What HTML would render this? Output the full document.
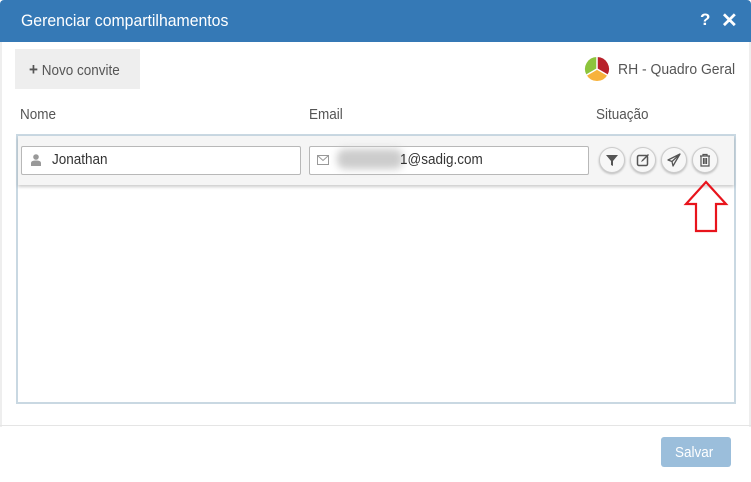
<!DOCTYPE html>
<html><head><style>
body{margin:0;width:751px;height:482px;background:#fff;font-family:"Liberation Sans",sans-serif;overflow:hidden;position:relative}
.a{position:absolute}
.t{display:inline-block;transform:scaleX(.9);transform-origin:left center;white-space:nowrap}
.hdr{left:0;top:0;width:751px;height:42px;background:#3579b6;border-radius:4px 4px 0 0}
.inp{background:#fff;border:1px solid #b8b8b8;border-radius:2px;height:27px;top:146px}
.cb{width:24px;height:24px;border-radius:50%;background:#f7f7f7;border:1px solid #ccc;box-shadow:0 1px 2px rgba(0,0,0,.25);top:147px}
.cb svg{position:absolute;left:5px;top:5px}
</style></head><body>
<div class="a hdr"></div>
<div class="a" style="left:21px;top:11px;color:#fff;font-size:17px"><span class="t" style="transform:scaleX(.93)">Gerenciar compartilhamentos</span></div>
<div class="a" style="left:700px;top:10px;color:#fff;font-size:17px;font-weight:bold">?</div>
<div class="a" style="left:721px;top:8px;color:#fff;font-size:20px;font-weight:bold">✕</div>
<div class="a" style="left:0;top:42px;width:2px;height:385px;background:#eee"></div>
<div class="a" style="left:749px;top:42px;width:2px;height:385px;background:#eee"></div>
<div class="a" style="left:15px;top:49px;width:125px;height:40px;background:#eeeeee"></div>
<div class="a" style="left:29px;top:60px;color:#555;font-size:15px"><span class="t"><b style="font-size:17px">+</b> Novo convite</span></div>
<svg class="a" style="left:583px;top:55px" width="28" height="28" viewBox="-14 -14 28 28"><path d="M0 0L0-12A12 12 0 0 1 10.4 6Z" fill="#b8202a"/><path d="M0 0L10.4 6A12 12 0 0 1-10.4 6Z" fill="#f7b23b"/><path d="M0 0L-10.4 6A12 12 0 0 1 0-12Z" fill="#8cc43c"/><path d="M0 0L0-12M0 0L10.4 6M0 0L-10.4 6" stroke="#fff" stroke-width="1.5"/></svg>
<div class="a" style="left:618px;top:61px;color:#555;font-size:15px"><span class="t" style="transform:scaleX(.93)">RH - Quadro Geral</span></div>
<div class="a" style="left:20px;top:106px;color:#555;font-size:15px"><span class="t">Nome</span></div>
<div class="a" style="left:309px;top:106px;color:#555;font-size:15px"><span class="t">Email</span></div>
<div class="a" style="left:596px;top:106px;color:#555;font-size:15px"><span class="t">Situação</span></div>
<div class="a" style="left:16px;top:134px;width:716px;height:266px;border:2px solid #c9d8e2;background:#fff"></div>
<div class="a" style="left:18px;top:136px;width:716px;height:49px;background:#f5f5f5;box-shadow:0 2px 3px rgba(0,0,0,.2)"></div>
<div class="a inp" style="left:21px;width:278px"></div>
<svg class="a" style="left:31px;top:154px" width="10" height="12" viewBox="0 0 10 12"><circle cx="5" cy="3" r="2.8" fill="#999"/><path d="M0 12V9Q0 6.5 5 6.5Q10 6.5 10 9V12Z" fill="#999"/></svg>
<div class="a" style="left:52px;top:151px;color:#333;font-size:15px"><span class="t">Jonathan</span></div>
<div class="a inp" style="left:309px;width:278px"></div>
<svg class="a" style="left:317px;top:155px" width="12" height="10"><rect x=".5" y=".5" width="11" height="9" fill="none" stroke="#999"/><path d="M.5 .5L6 5.5L11.5 .5" fill="none" stroke="#999"/></svg>
<div class="a" style="left:337px;top:149px;width:66px;height:20px;background:#ccc;filter:blur(4px);border-radius:8px"></div>
<div class="a" style="left:400px;top:151px;color:#333;font-size:15px"><span class="t">1@sadig.com</span></div>
<div class="a cb" style="left:599px"><svg width="14" height="14" viewBox="0 0 14 14"><path d="M1 2H13L8 8V13L6 12V8Z" fill="#555"/></svg></div>
<div class="a cb" style="left:630px"><svg width="14" height="14" viewBox="0 0 14 14"><rect x="1.5" y="2.5" width="10" height="10" rx="1.5" fill="none" stroke="#555" stroke-width="1.5"/><path d="M5 9L6 7L12 1L13 2L7 8Z" fill="#555"/></svg></div>
<div class="a cb" style="left:661px"><svg width="14" height="14" viewBox="0 0 14 14"><path d="M13 1L1 7L5 8.5L6 13L8 9.5L13 1ZM5 8.5L13 1" fill="none" stroke="#555" stroke-width="1.3" stroke-linejoin="round"/></svg></div>
<div class="a cb" style="left:692px"><svg width="14" height="14" viewBox="0 0 14 14"><path d="M2 3H12M5 3V1.5H9V3M3 3V13H11V3M5.5 5V11M7 5V11M8.5 5V11" fill="none" stroke="#555" stroke-width="1.2"/></svg></div>
<svg class="a" style="left:683px;top:180px" width="46" height="54" viewBox="0 0 46 54"><path d="M23 2L43 24H33V51H13V24H3Z" fill="none" stroke="#e8141c" stroke-width="2.2"/></svg>
<div class="a" style="left:0;top:425px;width:751px;height:1px;background:#e5e5e5"></div>
<div class="a" style="left:661px;top:437px;width:70px;height:30px;background:#9bbedb;border-radius:3px"></div>
<div class="a" style="left:675px;top:444px;color:#fff;font-size:15px"><span class="t">Salvar</span></div>
</body></html>
